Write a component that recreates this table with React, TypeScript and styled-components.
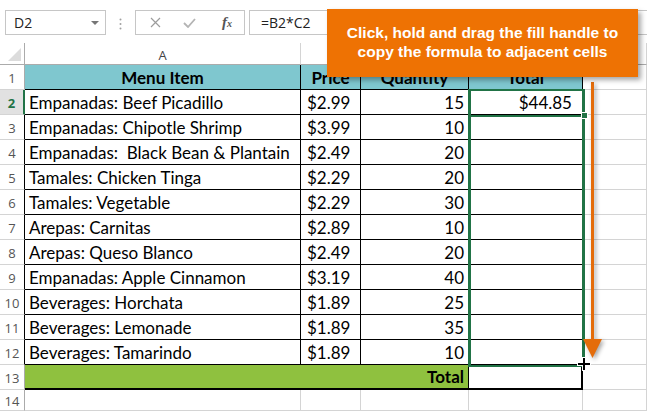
import React from 'react';
import styled, { createGlobalStyle } from 'styled-components';

const items: [string, string, number][] = [
  ['Empanadas: Beef Picadillo', '$2.99', 15],
  ['Empanadas: Chipotle Shrimp', '$3.99', 10],
  ['Empanadas:  Black Bean & Plantain', '$2.49', 20],
  ['Tamales: Chicken Tinga', '$2.29', 20],
  ['Tamales: Vegetable', '$2.29', 30],
  ['Arepas: Carnitas', '$2.89', 10],
  ['Arepas: Queso Blanco', '$2.49', 20],
  ['Empanadas: Apple Cinnamon', '$3.19', 40],
  ['Beverages: Horchata', '$1.89', 25],
  ['Beverages: Lemonade', '$1.89', 35],
  ['Beverages: Tamarindo', '$1.89', 10],
];

const GRID = '1px solid #d4d4d4';
const BLACK = '1px solid #000';
const THICK = '2px solid #000';

const GlobalStyle = createGlobalStyle`
  html, body {
    margin: 0;
    padding: 0;
    background: #fff;
  }
  body {
    width: 647px;
    height: 411px;
    overflow: hidden;
    font-family: 'Lato', 'Liberation Sans', sans-serif;
  }
`;

const Page = styled.div`
  position: relative;
  width: 647px;
  height: 411px;
  overflow: hidden;
  background: #fff;
`;

const FormulaBar = styled.div`
  display: flex;
  align-items: flex-start;
  height: 43px;
  box-sizing: border-box;
  padding: 10px 0 0 5px;
  font-family: 'Open Sans', 'Liberation Sans', sans-serif;
  font-size: 14px;
  color: #222;
`;

const NameBox = styled.div`
  box-sizing: border-box;
  width: 101px;
  height: 25px;
  border: 1px solid #c6c6c6;
  display: flex;
  align-items: center;
  justify-content: space-between;
  padding: 0 6px 0 8px;
`;

const Caret = styled.span`
  width: 0;
  height: 0;
  border-left: 4px solid transparent;
  border-right: 4px solid transparent;
  border-top: 4px solid #767676;
`;

const Grip = styled.svg`
  margin: 8px 13px 0 13px;
`;

const FuncBox = styled.div`
  box-sizing: border-box;
  width: 110px;
  height: 25px;
  border: 1px solid #c6c6c6;
  display: flex;
  align-items: center;
  padding: 0 0 0 14px;
  gap: 22px;
`;

const Fx = styled.span`
  font-family: 'Liberation Serif', serif;
  font-style: italic;
  font-weight: 700;
  font-size: 15px;
  color: #555;
  margin-left: 4px;

  small {
    font-size: 10px;
  }
`;

const FormulaInput = styled.div`
  box-sizing: border-box;
  flex: 1;
  height: 25px;
  margin-left: 4px;
  border: 1px solid #c6c6c6;
  border-right: none;
  display: flex;
  align-items: center;
  padding-left: 11px;
`;

const Sheet = styled.div`
  display: grid;
  grid-template-columns: 25px 276px 60px 108px 114px 64px;
  grid-template-rows: 22px repeat(13, 25px) 21px;
  font-size: 17px;
  color: #000;
`;

const ColHead = styled.div<{ $corner?: boolean }>`
  box-sizing: border-box;
  position: relative;
  display: flex;
  align-items: center;
  justify-content: center;
  border-right: ${(p) => (p.$corner ? '1px solid #ababab' : GRID)};
  border-bottom: 1px solid #ababab;
  font-family: 'Open Sans', 'Liberation Sans', sans-serif;
  font-size: 13px;
  color: #444;
  padding-top: 2px;
`;

const Corner = styled.span`
  position: absolute;
  right: 3px;
  bottom: 3px;
  width: 0;
  height: 0;
  border-left: 13px solid transparent;
  border-bottom: 13px solid #dcdcdc;
`;

const RowHead = styled.div<{ $active?: boolean; $edge?: string }>`
  box-sizing: border-box;
  display: flex;
  align-items: center;
  justify-content: center;
  background: ${(p) => (p.$active ? '#e1e1e1' : '#fff')};
  border-bottom: ${GRID};
  border-right: ${(p) => p.$edge ?? '1px solid #ababab'};
  color: ${(p) => (p.$active ? '#217346' : '#555')};
  font-family: 'Open Sans', 'Liberation Sans', sans-serif;
  font-weight: ${(p) => (p.$active ? 700 : 400)};
  font-size: 13px;
  padding-top: 2px;
`;

const Cell = styled.div<{
  $bg?: string;
  $align?: 'left' | 'right' | 'center';
  $bold?: boolean;
  $right?: string;
  $bottom?: string;
  $span?: number;
  $pad?: string;
}>`
  box-sizing: border-box;
  grid-column: span ${(p) => p.$span ?? 1};
  display: flex;
  align-items: flex-end;
  justify-content: ${(p) =>
    p.$align === 'right' ? 'flex-end' : p.$align === 'center' ? 'center' : 'flex-start'};
  padding: ${(p) => p.$pad ?? '0 4px 0 4px'};
  background: ${(p) => p.$bg ?? '#fff'};
  border-right: ${(p) => p.$right ?? GRID};
  border-bottom: ${(p) => p.$bottom ?? GRID};
  font-weight: ${(p) => (p.$bold ? 700 : 400)};
  line-height: 22px;
  white-space: pre;
  overflow: hidden;
`;

const Selection = styled.div`
  position: absolute;
  left: 468px;
  top: 89px;
  width: 117px;
  height: 278px;
  box-sizing: border-box;
  border: 2px solid #217346;
  border-left-width: 3px;
  border-right-width: 3px;
  pointer-events: none;
`;

const ActiveLine = styled.div`
  position: absolute;
  left: 469px;
  top: 115px;
  width: 113px;
  height: 2px;
  background: #217346;
`;

const FillHandle = styled.div`
  position: absolute;
  left: 581px;
  top: 112px;
  width: 5px;
  height: 5px;
  background: #217346;
  border: 1px solid #fff;
`;

const Callout = styled.div`
  position: absolute;
  left: 327px;
  top: 9px;
  width: 311px;
  height: 68px;
  background: #ee7203;
  box-shadow: 3px 3px 5px rgba(0, 0, 0, 0.35);
  display: flex;
  align-items: center;
  justify-content: center;
  text-align: center;
  color: #fff;
  font-family: 'Liberation Sans', Arial, sans-serif;
  font-weight: 700;
  font-size: 15.5px;
  line-height: 19px;
  padding-bottom: 2px;
  box-sizing: border-box;
`;

const Arrow = styled.svg`
  position: absolute;
  left: 578px;
  top: 78px;
  overflow: visible;
  filter: drop-shadow(2px 2px 2px rgba(0, 0, 0, 0.35));
`;

const Cursor = styled.svg`
  position: absolute;
  left: 576px;
  top: 356px;
`;

export default function App() {
  return (
    <Page>
      <GlobalStyle />
      <FormulaBar>
        <NameBox>
          D2
          <Caret />
        </NameBox>
        <Grip width="3" height="12" viewBox="0 0 3 12">
          <circle cx="1.5" cy="1.5" r="1" fill="#a0a0a0" />
          <circle cx="1.5" cy="6" r="1" fill="#a0a0a0" />
          <circle cx="1.5" cy="10.5" r="1" fill="#a0a0a0" />
        </Grip>
        <FuncBox>
          <svg width="11" height="11" viewBox="0 0 11 11">
            <path d="M1 1 L10 10 M10 1 L1 10" stroke="#9c9c9c" strokeWidth="1.2" />
          </svg>
          <svg width="13" height="10" viewBox="0 0 13 10">
            <path d="M1 5 L5 9 L12 1" stroke="#b4b4b4" strokeWidth="1.8" fill="none" />
          </svg>
          <Fx>
            f<small>x</small>
          </Fx>
        </FuncBox>
        <FormulaInput>=B2*C2</FormulaInput>
      </FormulaBar>

      <Sheet>
        <ColHead $corner>
          <Corner />
        </ColHead>
        <ColHead>A</ColHead>
        <ColHead />
        <ColHead />
        <ColHead />
        <ColHead />

        <RowHead>1</RowHead>
        <Cell $bg="#7fc7cf" $align="center" $bold $right={BLACK} $bottom={BLACK}>
          Menu Item
        </Cell>
        <Cell $bg="#7fc7cf" $align="center" $bold $right={BLACK} $bottom={BLACK}>
          Price
        </Cell>
        <Cell $bg="#7fc7cf" $align="center" $bold $right={BLACK} $bottom={BLACK}>
          Quantity
        </Cell>
        <Cell $bg="#7fc7cf" $align="center" $bold $right={BLACK} $bottom={BLACK}>
          Total
        </Cell>
        <Cell />

        {items.map(([name, price, qty], i) => (
          <React.Fragment key={name}>
            <RowHead
              $active={i === 0}
              $edge={i === 0 ? '2px solid #217346' : BLACK}
            >
              {i + 2}
            </RowHead>
            <Cell $right={BLACK} $bottom={BLACK}>
              {name}
            </Cell>
            <Cell $right={BLACK} $bottom={BLACK} $pad="0 4px 0 6px">
              {price}
            </Cell>
            <Cell $align="right" $right={BLACK} $bottom={BLACK}>
              {qty}
            </Cell>
            <Cell $align="right" $right={BLACK} $bottom={BLACK} $pad="0 10px 0 4px">
              {i === 0 ? '$44.85' : ''}
            </Cell>
            <Cell />
          </React.Fragment>
        ))}

        <RowHead>13</RowHead>
        <Cell $span={3} $bg="#8fc13f" $align="right" $bold $right={BLACK} $bottom={THICK}>
          Total
        </Cell>
        <Cell $right={THICK} $bottom={THICK} />
        <Cell />

        <RowHead>14</RowHead>
        <Cell />
        <Cell />
        <Cell />
        <Cell />
        <Cell />
      </Sheet>

      <Selection />
      <ActiveLine />
      <FillHandle />

      <Arrow width="26" height="282" viewBox="0 0 26 282">
        <rect x="13" y="4" width="3" height="260" fill="#e46c0a" />
        <polygon points="5,261 24,261 14.5,280" fill="#e46c0a" />
      </Arrow>

      <Cursor width="16" height="16" viewBox="0 0 16 16">
        <path d="M8 1 V15 M1 8 H15" stroke="#fff" strokeWidth="4" />
        <path d="M8 2 V14 M2 8 H14" stroke="#000" strokeWidth="2" />
      </Cursor>

      <Callout>
        Click, hold and drag the fill handle to
        <br />
        copy the formula to adjacent cells
      </Callout>
    </Page>
  );
}
